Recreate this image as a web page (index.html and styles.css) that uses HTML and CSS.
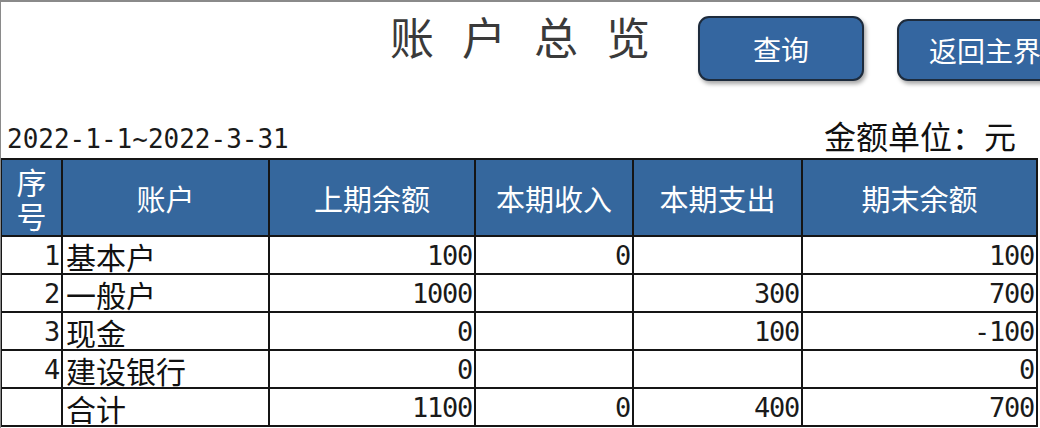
FILE: index.html
```html
<!DOCTYPE html>
<html lang="zh-CN">
<head>
<meta charset="utf-8">
<title>账户总览</title>
<link rel="stylesheet" href="styles.css">
</head>
<body>
<div class="frame">
  <header class="topbar">
    <h1 class="title">账户总览</h1>
    <div class="actions">
      <button class="btn btn-query" type="button">查询</button>
      <button class="btn btn-home" type="button">返回主界面</button>
    </div>
  </header>
  <div class="meta">
    <span class="period">2022-1-1~2022-3-31</span>
    <span class="unit">金额单位：元</span>
  </div>
  <table class="sheet">
    <colgroup>
      <col class="c-no">
      <col class="c-acc">
      <col class="c-prev">
      <col class="c-in">
      <col class="c-out">
      <col class="c-end">
    </colgroup>
    <thead>
      <tr>
        <th class="th-no">序<br>号</th>
        <th>账户</th>
        <th>上期余额</th>
        <th>本期收入</th>
        <th>本期支出</th>
        <th>期末余额</th>
      </tr>
    </thead>
    <tbody>
      <tr>
        <td class="num">1</td><td class="name">基本户</td><td class="num">100</td><td class="num">0</td><td class="num"></td><td class="num">100</td>
      </tr>
      <tr>
        <td class="num">2</td><td class="name">一般户</td><td class="num">1000</td><td class="num"></td><td class="num">300</td><td class="num">700</td>
      </tr>
      <tr>
        <td class="num">3</td><td class="name">现金</td><td class="num">0</td><td class="num"></td><td class="num">100</td><td class="num">-100</td>
      </tr>
      <tr>
        <td class="num">4</td><td class="name">建设银行</td><td class="num">0</td><td class="num"></td><td class="num"></td><td class="num">0</td>
      </tr>
      <tr>
        <td class="num"></td><td class="name">合计</td><td class="num">1100</td><td class="num">0</td><td class="num">400</td><td class="num">700</td>
      </tr>
    </tbody>
  </table>
</div>
</body>
</html>
```

FILE: styles.css
```css
html, body {
  margin: 0;
  padding: 0;
  background: #ffffff;
}

body {
  width: 1040px;
  height: 428px;
  overflow: hidden;
  font-family: "Noto Sans CJK SC", "Noto Sans", sans-serif;
  color: #111111;
}

.frame {
  width: 1040px;
  height: 428px;
  box-sizing: border-box;
  border-top: 2px solid #8a8a8a;
  border-left: 1px solid #8a8a8a;
  overflow: hidden;
}

.topbar {
  height: 98px;
  display: flex;
  align-items: flex-start;
  padding-left: 389px;
  box-sizing: border-box;
  overflow: hidden;
}

.title {
  margin: 4px 0 0 0;
  font-size: 44px;
  font-weight: 400;
  line-height: 60px;
  letter-spacing: 28px;
  color: #3a3a3a;
  white-space: nowrap;
  flex: none;
}

.actions {
  display: flex;
  gap: 33px;
  margin-left: 20px;
  padding-top: 14px;
  white-space: nowrap;
  flex: none;
}

.btn {
  height: 65px;
  box-sizing: border-box;
  border: 2px solid #1d2b3c;
  border-radius: 11px;
  background: #3466a0;
  color: #ffffff;
  font-family: "Noto Sans CJK SC", "Noto Sans", sans-serif;
  font-size: 28px;
  line-height: 1;
  padding: 0;
  box-shadow: 2px 3px 4px rgba(0, 0, 0, 0.35);
  flex: none;
}

.btn-query {
  width: 166px;
}

.btn-home {
  width: 200px;
  height: 62px;
  margin-top: 3px;
  text-align: left;
  padding-left: 30px;
}

.meta {
  height: 58px;
  display: flex;
  justify-content: space-between;
  align-items: flex-end;
  padding: 0 24px 4px 6px;
  box-sizing: border-box;
}

.period {
  font-family: "DejaVu Sans Mono", monospace;
  font-size: 26px;
  line-height: 30px;
  color: #1a1a1a;
}

.unit {
  font-size: 32px;
  line-height: 38px;
  color: #111111;
}

.sheet {
  border-collapse: collapse;
  table-layout: fixed;
  width: 1036px;
  margin-left: -1px;
}

.c-no { width: 61px; }
.c-acc { width: 207px; }
.c-prev { width: 206px; }
.c-in { width: 158px; }
.c-out { width: 169px; }
.c-end { width: 235px; }

.sheet th,
.sheet td {
  border: 2px solid #151515;
  padding: 0;
  white-space: nowrap;
}

.sheet th {
  height: 75px;
  background: #35679d;
  color: #ffffff;
  font-weight: 400;
  font-size: 29px;
  line-height: 34px;
  text-align: center;
  vertical-align: middle;
}

.sheet th.th-no {
  font-size: 30px;
  line-height: 34px;
}

.sheet td {
  height: 36px;
  box-sizing: border-box;
  line-height: 34px;
  vertical-align: bottom;
}

.sheet td.num {
  font-family: "DejaVu Sans Mono", monospace;
  font-size: 27px;
  letter-spacing: -1.25px;
  text-align: right;
  padding: 2px 2px 0 0;
  color: #1a1a1a;
}

.sheet td.name {
  font-size: 30px;
  text-align: left;
  padding: 2px 0 0 3px;
}
```
